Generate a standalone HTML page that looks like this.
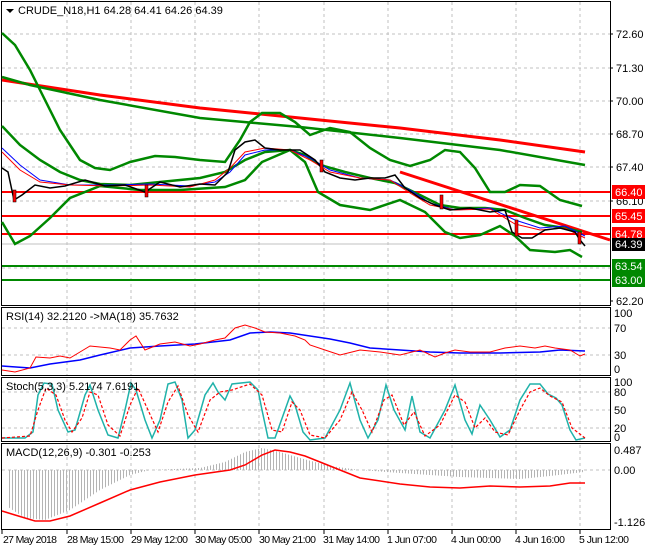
<!DOCTYPE html>
<html><head><meta charset="utf-8"><style>
body{margin:0;background:#fff;width:650px;height:550px;overflow:hidden;font-family:"Liberation Sans",sans-serif}
svg text{font-family:"Liberation Sans",sans-serif;font-size:11px;fill:#000}
svg text.t{font-size:10.5px}
</style></head><body>
<svg width="650" height="550" xmlns="http://www.w3.org/2000/svg">
<defs>
<pattern id="hb" width="3" height="4" patternUnits="userSpaceOnUse"><rect x="0" y="0" width="1" height="4" fill="#b4b4b4"/></pattern>
</defs>
<rect width="650" height="550" fill="#fff"/>
<g stroke="#c0c0c0" stroke-dasharray="3,3" stroke-width="1">
<path d="M67 2V305M131 2V305M195 2V305M259 2V305M324 2V305M388 2V305M452 2V305M516 2V305M580 2V305"/>
<path d="M67 308V375M131 308V375M195 308V375M259 308V375M324 308V375M388 308V375M452 308V375M516 308V375M580 308V375"/>
<path d="M67 379V441M131 379V441M195 379V441M259 379V441M324 379V441M388 379V441M452 379V441M516 379V441M580 379V441"/>
<path d="M67 445V528M131 445V528M195 445V528M259 445V528M324 445V528M388 445V528M452 445V528M516 445V528M580 445V528"/>
<path d="M2 34H610M2 68H610M2 101H610M2 134H610M2 167H610M2 201H610M2 234H610M2 268H610"/>
<path d="M2 328H610M2 355H610M2 392H610M2 410H610M2 428H610M2 470H610"/>
</g>
<g fill="none" stroke="#000" stroke-width="1">
<rect x="1.5" y="1.5" width="609" height="304"/>
<rect x="1.5" y="307.5" width="609" height="68"/>
<rect x="1.5" y="377.5" width="609" height="64"/>
<rect x="1.5" y="443.5" width="609" height="86"/>
</g>
<g stroke="#000"><path d="M2 530v4M67 530v4M131 530v4M195 530v4M259 530v4M324 530v4M388 530v4M452 530v4M516 530v4M580 530v4"/></g>
<line x1="2" y1="192" x2="610" y2="192" stroke="#f00" stroke-width="2"/>
<line x1="2" y1="216" x2="610" y2="216" stroke="#f00" stroke-width="2"/>
<line x1="2" y1="234" x2="610" y2="234" stroke="#f00" stroke-width="2"/>
<line x1="2" y1="244" x2="610" y2="244" stroke="#c0c0c0" stroke-width="1"/>
<line x1="2" y1="266" x2="610" y2="266" stroke="#080" stroke-width="2"/>
<line x1="2" y1="280" x2="610" y2="280" stroke="#080" stroke-width="2"/>
<polyline fill="none" stroke="#f00" stroke-width="3" points="2,80 100,95 200,108 300,118 400,128 500,140 585,152"/>
<polyline fill="none" stroke="#080" stroke-width="2.5" points="2,77 30,85 100,100 200,118 300,127 400,138 500,150 585,165"/>
<line x1="400" y1="172" x2="610" y2="240" stroke="#f00" stroke-width="3"/>
<g fill="none" stroke="#080" stroke-width="2.5">
<polyline points="2,33 15,45 30,70 45,100 60,130 80,160 95,168 110,170 130,162 155,156 175,157 200,160 225,162 240,140 250,122 262,113 280,113 295,122 310,135 330,128 350,132 370,148 390,160 410,166 430,160 445,150 460,152 475,168 490,192 505,192 520,185 540,186 560,200 582,206"/>
<polyline points="2,126 20,145 40,160 60,172 80,180 100,184 130,185 160,182 200,178 225,172 245,160 265,152 290,150 305,155 320,165 345,172 370,178 395,183 420,195 440,205 460,208 485,208 505,210 525,218 545,225 565,228 582,232"/>
<polyline points="2,222 15,244 30,236 50,218 70,198 100,186 140,190 180,190 225,187 245,180 262,162 290,150 305,162 318,192 340,205 370,210 400,200 425,212 445,232 460,238 480,235 500,226 515,236 530,250 555,252 570,250 582,257"/>
</g>
<polyline fill="none" stroke="#00f" stroke-width="1" points="2,148 20,165 40,180 70,185 110,185 150,184 190,186 215,182 230,172 245,155 265,150 290,150 310,158 330,170 360,178 390,180 410,190 430,203 455,210 490,208 515,220 540,228 565,226 585,236"/>
<polyline fill="none" stroke="#f00" stroke-width="1" points="2,152 20,170 40,182 70,185 110,186 150,185 190,187 215,180 230,168 245,152 265,148 290,150 310,160 330,172 360,178 390,180 410,193 430,205 455,210 490,209 515,224 540,230 565,228 585,238"/>
<polyline fill="none" stroke="#000" stroke-width="1.5" points="2,168 8,172 14,200 22,195 35,185 50,188 65,186 85,180 105,186 125,185 145,192 160,182 180,187 200,184 215,185 228,172 235,150 245,142 255,140 265,148 280,150 300,150 315,160 325,172 340,178 355,180 370,178 385,178 395,175 405,188 420,198 435,205 450,210 470,208 490,212 505,210 512,232 522,238 532,238 545,230 560,228 575,232 580,240 585,246"/>
<g fill="#f00" stroke="#000" stroke-width="0.5">
<rect x="13" y="190" width="3" height="12"/><rect x="145" y="185" width="3" height="12"/><rect x="320" y="160" width="3" height="12"/><rect x="440" y="195" width="3" height="14"/><rect x="515" y="220" width="3" height="16"/><rect x="578" y="232" width="3" height="12"/>
</g>
<polyline fill="none" stroke="#00f" stroke-width="1.5" points="2,366 30,368 50,364 80,360 100,355 130,348 160,346 195,344 230,340 250,333 270,332 290,333 310,336 330,339 350,343 370,348 400,350 430,352 460,353 500,353 540,352 560,350 585,351"/>
<polyline fill="none" stroke="#f00" stroke-width="1" points="2,370 15,372 30,368 36,357 50,358 60,356 70,358 80,352 90,346 110,348 120,350 130,340 136,336 145,350 160,344 175,342 190,346 200,344 215,340 225,338 235,328 245,325 255,328 265,332 280,333 295,336 305,340 310,345 325,350 340,355 360,350 380,352 400,355 420,350 435,357 445,353 455,350 470,352 490,352 505,348 520,346 535,348 545,346 555,348 570,350 580,356 585,354"/>
<polyline fill="none" stroke="#20b2aa" stroke-width="1.5" points="2,438 25,438 33,432 38,395 44,383 52,384 58,410 68,432 75,430 85,395 90,385 98,410 108,435 118,438 125,410 131,383 136,390 145,420 152,438 160,420 168,384 175,382 182,400 188,438 195,430 205,395 213,383 218,392 225,400 232,384 250,382 258,390 262,410 268,438 275,438 285,410 290,396 295,405 303,432 310,440 325,438 340,410 350,383 360,420 368,438 378,420 386,385 394,410 405,430 412,396 420,432 430,438 445,410 455,385 465,420 472,434 480,405 490,420 500,437 510,430 520,400 530,384 540,384 548,394 556,398 562,405 570,430 576,440 585,438"/>
<polyline fill="none" stroke="#f00" stroke-width="1.2" stroke-dasharray="3,2" points="2,438 30,436 38,410 46,388 56,395 65,420 72,432 82,418 90,392 98,395 108,425 120,436 130,405 138,388 148,410 158,432 168,402 178,386 188,415 198,432 210,400 220,392 232,390 250,384 262,395 272,430 282,432 292,402 300,410 310,435 325,438 340,420 352,392 362,410 372,432 384,400 392,395 404,425 414,412 425,436 440,425 455,395 465,402 475,428 485,418 495,432 508,435 520,410 530,392 540,388 550,396 562,402 572,428 585,438"/>
<polygon fill="url(#hb)" points="8,470 8,507 25,518 45,520 70,510 100,490 130,475 150,470 200,468 225,462 245,452 262,448 280,452 300,458 330,466 360,470 400,473 430,475 460,477 490,478 520,479 550,476 584,472 584,470"/>
<polyline fill="none" stroke="#f00" stroke-width="1.5" points="2,511 15,515 35,521 50,521 70,516 100,503 130,490 160,482 195,475 230,470 245,465 262,455 275,450 290,452 305,456 330,466 360,478 400,484 430,487 460,488 490,486 520,487 550,486 570,483 585,483"/>
<path d="M6 9h8l-4 4z" fill="#000"/>
<text x="18" y="14">CRUDE_N18,H1  64.28 64.41 64.26 64.39</text>
<text x="6" y="320">RSI(14) 32.2120  -&gt;MA(18) 35.7632</text>
<text x="6" y="390">Stoch(5,3,3) 5.2174 7.6191</text>
<text x="6" y="456">MACD(12,26,9) -0.301 -0.253</text>
<g>
<text x="616" y="38">72.60</text><text x="616" y="72">71.30</text><text x="616" y="105">70.00</text>
<text x="616" y="138">68.70</text><text x="616" y="171">67.40</text><text x="616" y="205">66.10</text><text x="616" y="305">62.20</text>
<text x="614" y="317">100</text><text x="614" y="332">70</text><text x="614" y="359">30</text><text x="614" y="373">0</text>
<text x="614" y="386">100</text><text x="614" y="396">80</text><text x="614" y="414">50</text><text x="614" y="432">20</text><text x="614" y="441">0</text>
<text x="614" y="454">0.487</text><text x="614" y="474">0.00</text><text x="614" y="526">-1.126</text>
</g>
<g stroke="#000"><path d="M610 34h3M610 68h3M610 101h3M610 134h3M610 167h3M610 201h3M610 301h3"/></g>
<rect x="612" y="185" width="33" height="14" fill="#f00"/><text x="615" y="196" style="fill:#fff">66.40</text>
<rect x="612" y="209" width="33" height="14" fill="#f00"/><text x="615" y="220" style="fill:#fff">65.45</text>
<rect x="612" y="227" width="33" height="14" fill="#f00"/><text x="615" y="238" style="fill:#fff">64.78</text>
<rect x="612" y="238" width="33" height="13" fill="#000"/><text x="615" y="248" style="fill:#fff">64.39</text>
<rect x="612" y="259" width="33" height="14" fill="#080"/><text x="615" y="270" style="fill:#fff">63.54</text>
<rect x="612" y="273" width="33" height="14" fill="#080"/><text x="615" y="284" style="fill:#fff">63.00</text>
<g>
<text class="t" x="3" y="543" textLength="54">27 May 2018</text><text class="t" x="67" y="543" textLength="57">28 May 15:00</text><text class="t" x="131" y="543" textLength="57">29 May 12:00</text>
<text class="t" x="195" y="543" textLength="57">30 May 05:00</text><text class="t" x="259" y="543" textLength="57">30 May 21:00</text><text class="t" x="323" y="543" textLength="57">31 May 14:00</text>
<text class="t" x="387" y="543" textLength="50">1 Jun 07:00</text><text class="t" x="451" y="543" textLength="50">4 Jun 00:00</text><text class="t" x="515" y="543" textLength="50">4 Jun 16:00</text>
<text class="t" x="579" y="543" textLength="50">5 Jun 12:00</text>
</g>
</svg>
</body></html>
